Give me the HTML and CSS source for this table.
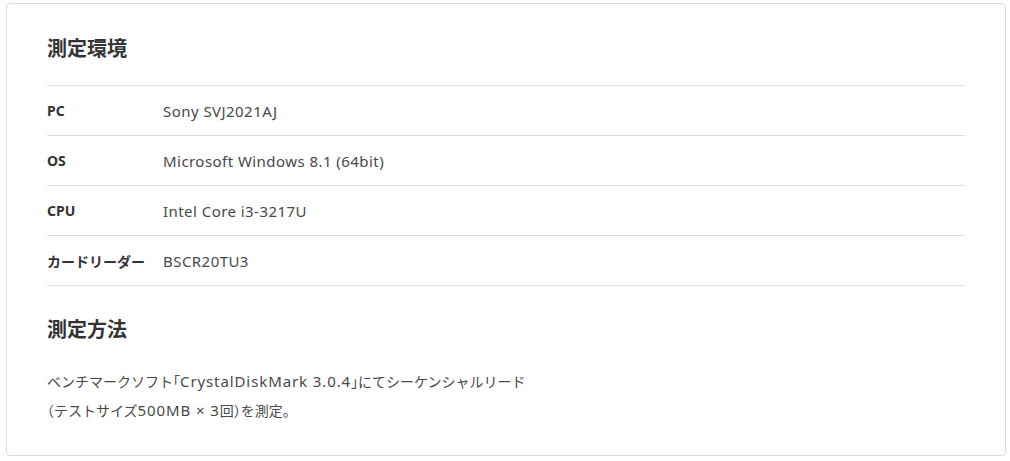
FILE: index.html
```html
<!DOCTYPE html>
<html lang="ja">
<head>
<meta charset="utf-8">
<link rel="stylesheet" href="styles.css">
</head>
<body>
<div class="card">
  <h2 class="heading">測定環境</h2>
  <div class="spec">
    <div class="row"><div class="label">PC</div><div class="value">Sony SVJ2021AJ</div></div>
    <div class="row"><div class="label">OS</div><div class="value">Microsoft Windows 8.1 (64bit)</div></div>
    <div class="row"><div class="label">CPU</div><div class="value">Intel Core i3-3217U</div></div>
    <div class="row"><div class="label">カードリーダー</div><div class="value">BSCR20TU3</div></div>
  </div>
  <h2 class="heading heading-2">測定方法</h2>
  <p class="text">ベンチマークソフト<span class="br">「</span><span class="lat">CrystalDiskMark 3.0.4</span><span class="br">」</span>にてシーケンシャルリード<br><span class="br">（</span>テストサイズ<span class="lat">500MB × 3</span>回<span class="br">）</span>を測定。</p>
</div>
</body>
</html>
```
FILE: styles.css
```css
html, body {
  margin: 0;
  padding: 0;
  background: #fff;
}
body {
  padding: 3px 0 0 6px;
  font-family: "Noto Sans", "Noto Sans CJK JP", sans-serif;
  color: #333;
}
.card {
  box-sizing: border-box;
  width: 1000px;
  height: 453px;
  border: 1px solid #dcdcdc;
  border-radius: 4px;
  padding: 31px 40px 0 40px;
}
.heading {
  margin: 0;
  font-size: 20px;
  line-height: 28px;
  font-weight: bold;
  color: #333;
}
.spec {
  margin-top: 22px;
  border-bottom: 1px solid #dcdcdc;
}
.row {
  display: flex;
  align-items: center;
  height: 49px;
  border-top: 1px solid #dcdcdc;
  font-size: 14px;
}
.label {
  width: 116px;
  flex: none;
  font-weight: bold;
  color: #333;
  font-size: 14px;
}
.value {
  color: #484848;
  font-size: 15px;
  letter-spacing: 0.45px;
}
.heading-2 {
  margin-top: 30px;
}
.text {
  margin: 23px 0 0;
  font-size: 14px;
  line-height: 29px;
  color: #484848;
}
.text .lat {
  font-size: 15px;
  letter-spacing: 0.9px;
}
.text .br {
  font-feature-settings: "halt";
}
```
